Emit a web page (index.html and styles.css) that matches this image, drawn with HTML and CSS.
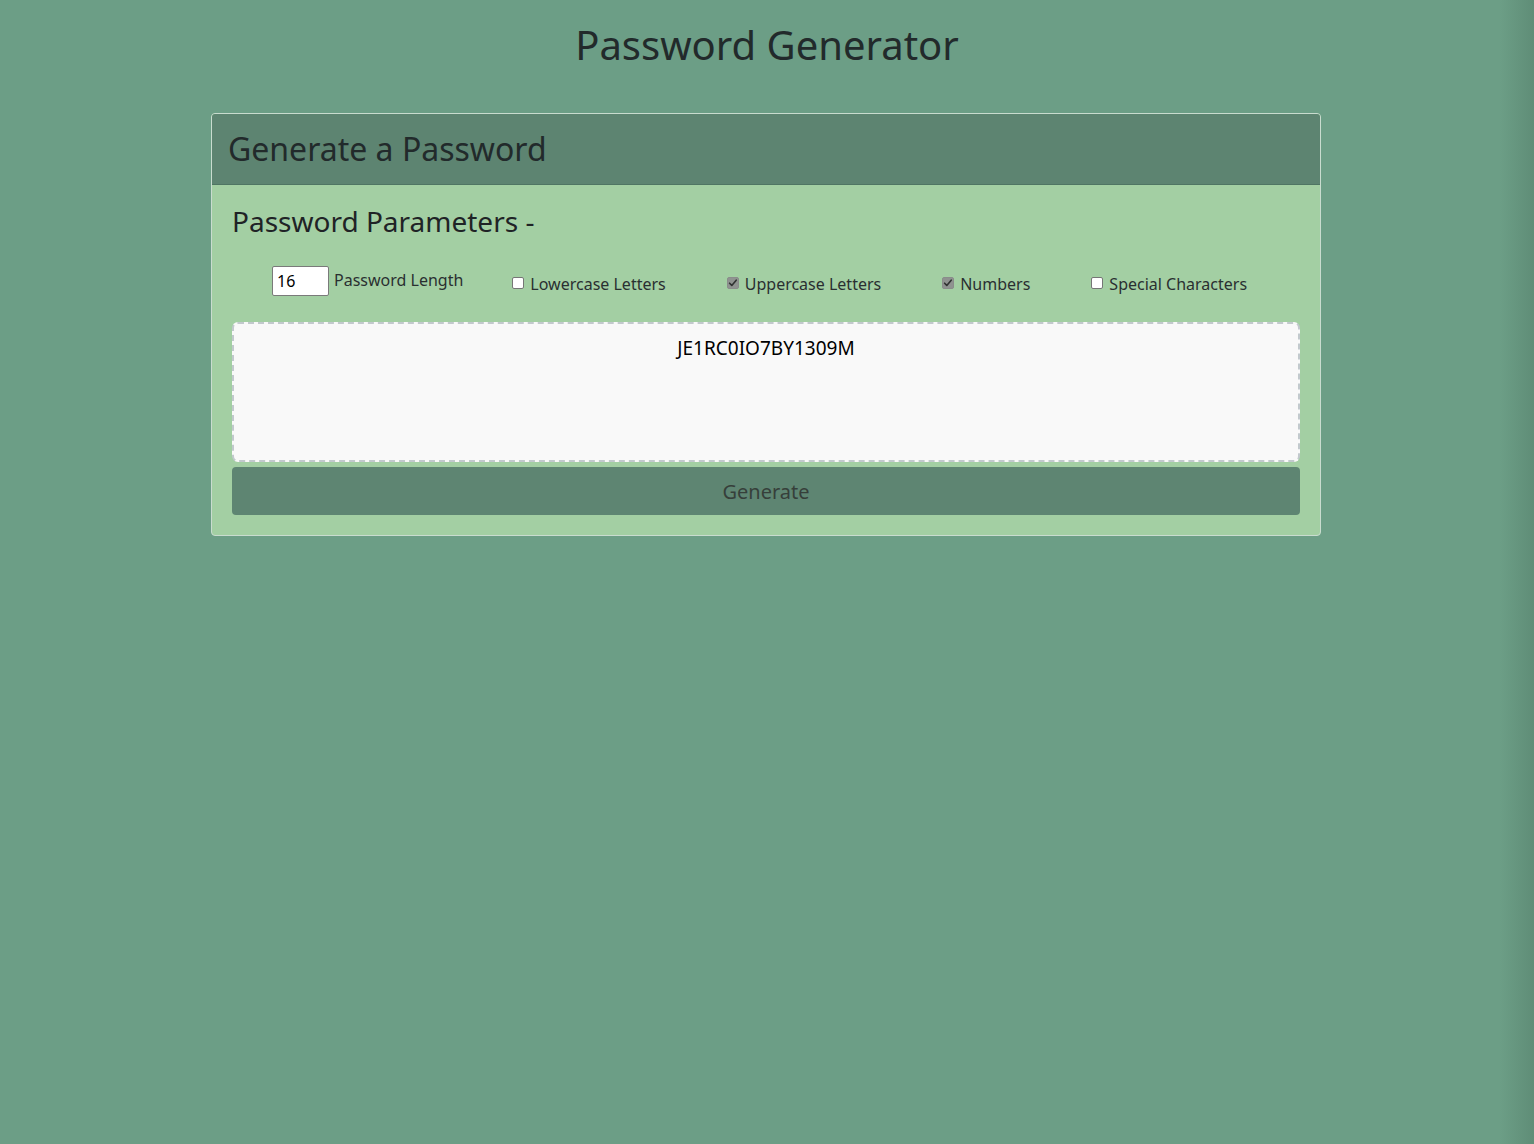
FILE: index.html
```html
<!DOCTYPE html>
<html lang="en">
<head>
<meta charset="utf-8">
<title>Password Generator</title>
<link rel="stylesheet" href="styles.css">
</head>
<body>
<div class="page">
  <h1 class="title">Password Generator</h1>
  <div class="card">
    <div class="card-header">
      <h2 class="card-title">Generate a Password</h2>
    </div>
    <div class="card-body">
      <h3 class="params-title">Password Parameters -</h3>
      <div class="options">
        <div class="opt opt-length">
          <input class="len-input" type="text" value="16">
          <span class="opt-label">Password Length</span>
        </div>
        <label class="opt opt-check"><input type="checkbox" class="cb"><span class="opt-label">Lowercase Letters</span></label>
        <label class="opt opt-check"><input type="checkbox" class="cb" checked disabled><span class="opt-label">Uppercase Letters</span></label>
        <label class="opt opt-check"><input type="checkbox" class="cb" checked disabled><span class="opt-label">Numbers</span></label>
        <label class="opt opt-check"><input type="checkbox" class="cb"><span class="opt-label">Special Characters</span></label>
      </div>
      <div class="output">JE1RC0IO7BY1309M</div>
      <button class="gen-btn" type="button">Generate</button>
    </div>
  </div>
</div>
</body>
</html>
```
FILE: styles.css
```css
html, body {
  margin: 0;
  padding: 0;
  height: 100%;
}
body {
  font-family: "Noto Sans", "Open Sans", sans-serif;
  color: #212529;
  background: linear-gradient(to right, #6c9e86 0, #6c9e86 calc(100% - 34px), #5f8d77 100%);
}
.page {
  width: 1112px;
  margin: 0 auto;
  padding-top: 18px;
}
.title {
  margin: 0 0 41px;
  text-align: center;
  font-size: 40px;
  font-weight: 400;
  line-height: 54px;
  color: #222a2b;
}
.card {
  width: 1110px;
  box-sizing: border-box;
  border: 1px solid #c9dccf;
  border-radius: 4px;
  overflow: hidden;
  background: #a3cfa3;
}
.card-header {
  background: #5d8471;
  height: 70px;
  display: flex;
  align-items: center;
  padding: 0 16px;
  border-bottom: 1px solid #4f7563;
}
.card-title {
  margin: 0;
  font-size: 32px;
  font-weight: 400;
  color: #222a2b;
  line-height: 1.2;
}
.card-body {
  padding: 16px 20px 20px;
}
.params-title {
  margin: 0;
  font-size: 28px;
  font-weight: 400;
  line-height: 40px;
  color: #1f2326;
}
.options {
  display: flex;
  align-items: center;
  gap: 61px;
  padding-left: 40px;
  margin-top: 25px;
  height: 30px;
}
.opt {
  display: flex;
  align-items: center;
  font-size: 16px;
  color: #2a2f31;
}
.opt-check {
  padding-top: 6px;
}
.opt-length {
  margin-right: -12px;
}
.len-input {
  width: 57px;
  height: 30px;
  box-sizing: border-box;
  border: 1px solid #7a7a7a;
  border-radius: 2px;
  padding: 2px 4px;
  font-family: "Noto Sans", sans-serif;
  font-size: 16px;
  color: #000;
  background: #fff;
  margin: 0 5px 0 0;
}
.opt-length .opt-label {
  position: relative;
  top: -1px;
}
.opt .opt-label {
  line-height: 20px;
}
.cb {
  -webkit-appearance: none;
  appearance: none;
  box-sizing: border-box;
  width: 12px;
  height: 12px;
  margin: 0 6px 0 0;
  border: 1px solid #767676;
  border-radius: 2px;
  background: #fff;
  position: relative;
  top: -1px;
}
.cb:checked {
  border-color: #8a8d8b;
  background-color: #8f9390;
  background-image: url("data:image/svg+xml,%3Csvg xmlns='http://www.w3.org/2000/svg' viewBox='0 0 12 12'%3E%3Cpath d='M2.6 6.2 L4.8 8.4 L9.2 3.2' fill='none' stroke='%23303332' stroke-width='1.6' stroke-linecap='round' stroke-linejoin='round'/%3E%3C/svg%3E");
  background-size: 12px 12px;
  background-position: center;
  background-repeat: no-repeat;
}
.output {
  margin-top: 26px;
  height: 140px;
  box-sizing: border-box;
  border: 2px dashed #c2c9cd;
  border-radius: 6px;
  background: #f9f9f9;
  text-align: center;
  font-size: 19px;
  padding-top: 11px;
  color: #000;
  line-height: 26px;
}
.gen-btn {
  display: block;
  width: 100%;
  margin-top: 5px;
  height: 48px;
  border: none;
  border-radius: 4px;
  background: #5e8572;
  color: #363f3a;
  font-family: "Noto Sans", sans-serif;
  font-size: 20px;
}
```
